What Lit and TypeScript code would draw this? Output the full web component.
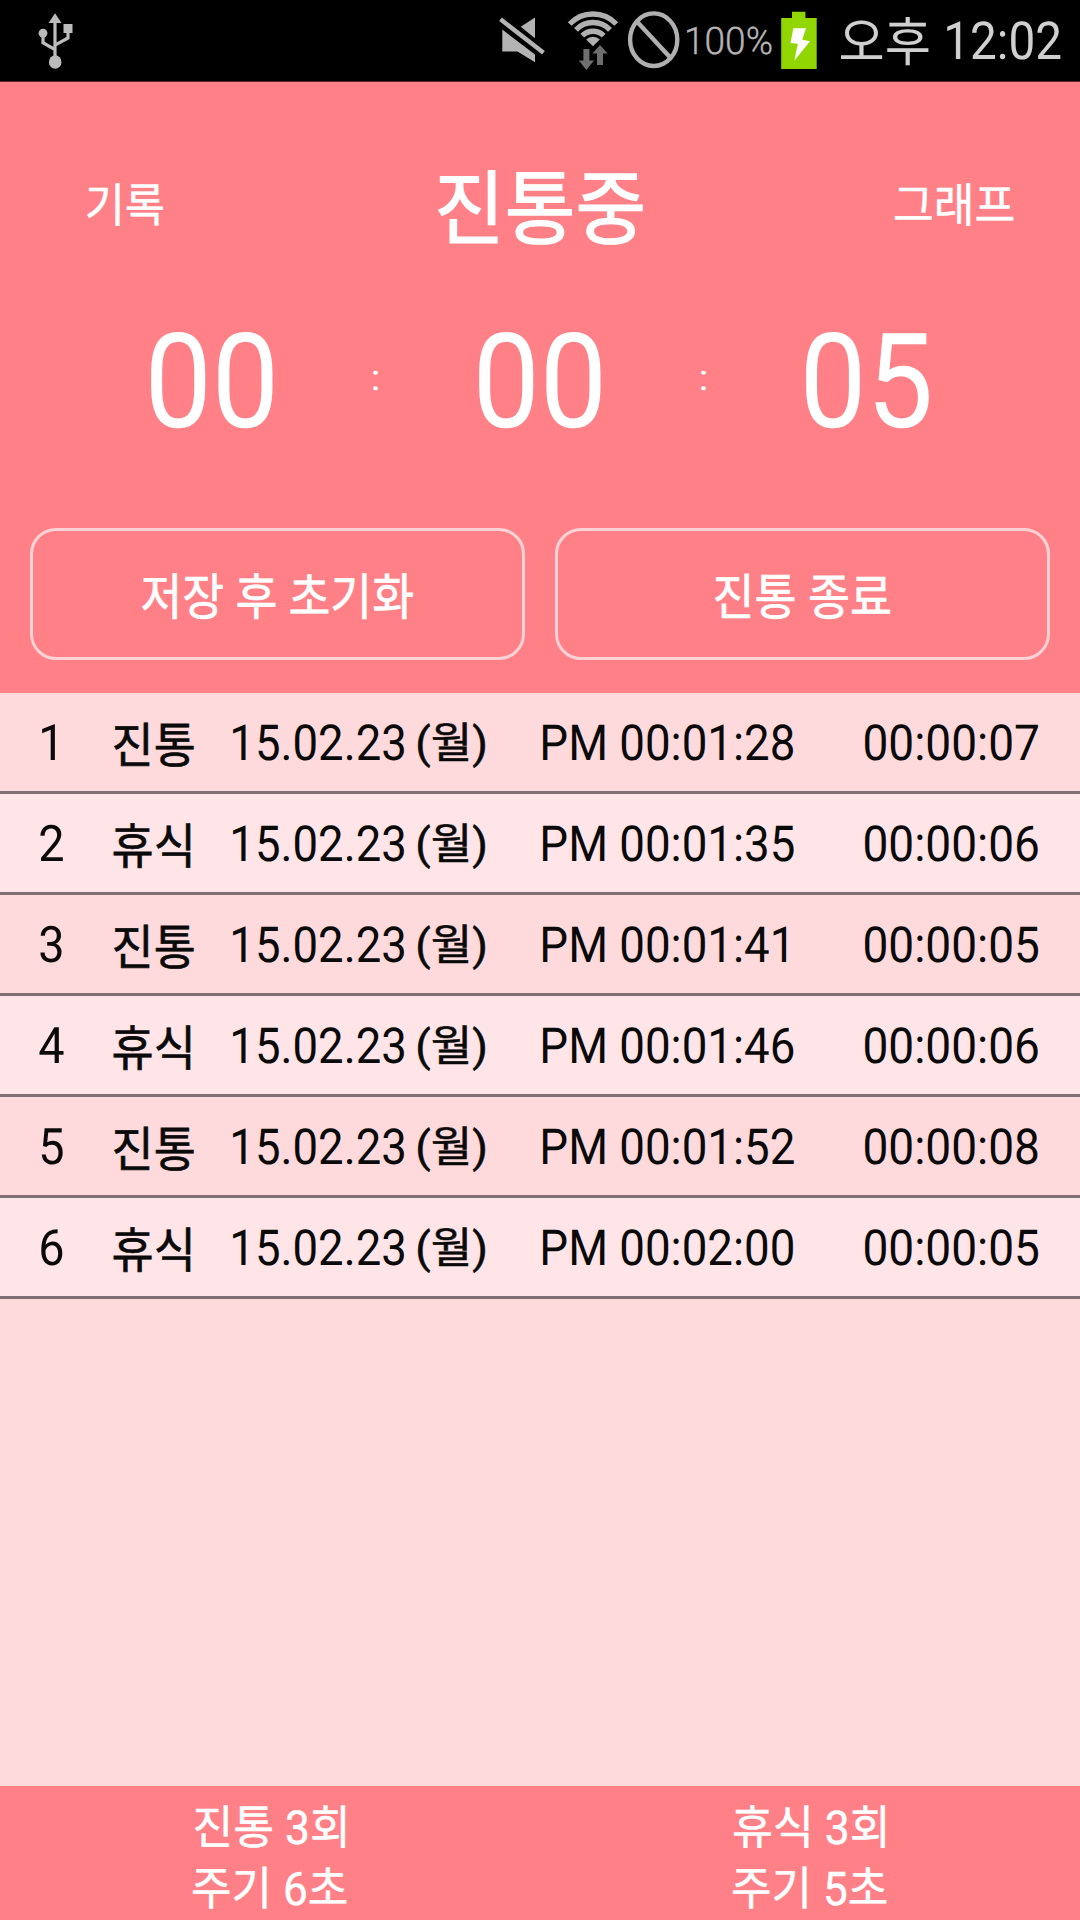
import { LitElement, html, css } from "lit";
import { customElement, property, state } from "lit/decorators.js";
import { styleMap } from "lit/directives/style-map.js";

const FAMILY = 'Roboto, "Noto Sans CJK KR", sans-serif';

/**
 * Condensed label: the glyphs of `sample` (or of the text itself) fill a box
 * of w x h pixels; the text is drawn at that same scale.
 */
@customElement("fit-text")
export class FitText extends LitElement {
  @property() text = "";
  @property() sample = "";
  @property({ type: Number }) w = 100;
  @property({ type: Number }) h = 40;
  @property({ type: Number }) weight = 400;
  @property({ type: Number }) stroke = 0;

  static styles = css`
    :host {
      display: block;
      flex: none;
    }
    .box {
      display: block;
    }
    .glyphs {
      display: block;
      width: max-content;
      white-space: pre;
      line-height: 1;
      transform-origin: 0 0;
      font-family: Roboto, "Noto Sans CJK KR", sans-serif;
      text-rendering: geometricPrecision;
    }
  `;

  render() {
    const ctx = document.createElement("canvas").getContext("2d")! as any;
    const sample = this.sample || this.text;
    const inkH = this.h - this.stroke;
    const inkW = this.w - this.stroke;
    ctx.font = `${this.weight} 200px ${FAMILY}`;
    ctx.textRendering = "geometricPrecision";
    const m = ctx.measureText(sample);
    const k = inkH / (m.actualBoundingBoxAscent + m.actualBoundingBoxDescent);
    const size = 200 * k;
    const sx = inkW / ((m.actualBoundingBoxLeft + m.actualBoundingBoxRight) * k);
    const up = Math.round(m.fontBoundingBoxAscent * k);
    const down = Math.round(m.fontBoundingBoxDescent * k);
    const base = size / 2 + (up - down) / 2;
    const dx = m.actualBoundingBoxLeft * k * sx + this.stroke / 2;
    const dy = m.actualBoundingBoxAscent * k - base + this.stroke / 2;
    return html`<span class="box" style=${styleMap({ width: `${this.w}px`, height: `${this.h}px` })}
      ><span
        class="glyphs"
        style=${styleMap({
          fontSize: `${size}px`,
          fontWeight: String(this.weight),
          transform: `matrix(${sx},0,0,1,${dx},${dy})`,
          "-webkit-text-stroke": `${this.stroke}px currentColor`,
        })}
        >${this.text}</span
      ></span
    >`;
  }
}

interface Entry {
  kind: string;
  time: string;
  length: string;
}

@customElement("app-root")
export class AppRoot extends LitElement {
  @state() private entries: Entry[] = [
    { kind: "진통", time: "PM 00:01:28", length: "00:00:07" },
    { kind: "휴식", time: "PM 00:01:35", length: "00:00:06" },
    { kind: "진통", time: "PM 00:01:41", length: "00:00:05" },
    { kind: "휴식", time: "PM 00:01:46", length: "00:00:06" },
    { kind: "진통", time: "PM 00:01:52", length: "00:00:08" },
    { kind: "휴식", time: "PM 00:02:00", length: "00:00:05" },
  ];

  static styles = css`
    :host {
      display: flex;
      flex-direction: column;
      width: 1080px;
      height: 1920px;
      overflow: hidden;
      background: #ffdadd;
      color: #fff;
    }
    svg {
      display: block;
      flex: none;
      height: 81px;
    }
    .status {
      display: flex;
      box-sizing: border-box;
      height: 82px;
      padding-left: 36px;
      border-bottom: 1px solid #5a2c2f;
      background: #000;
      color: #b4b4b4;
    }
    .usb {
      width: 40px;
      margin-right: auto;
    }
    .mute {
      width: 52px;
      margin-right: 18px;
    }
    .wifi {
      width: 54px;
      margin-right: 6px;
    }
    .blocked {
      width: 56px;
    }
    .percent {
      margin: 28px 8px 0 5.6px;
    }
    .battery {
      width: 38px;
    }
    .clock {
      display: flex;
      gap: 18px;
      margin: 16.7px 20px 0 23.7px;
      color: #d0d0d0;
    }
    .hour {
      margin-top: 4.3px;
    }
    .panel {
      flex: none;
      box-sizing: border-box;
      height: 611px;
      padding-top: 87.5px;
      background: #ff8086;
    }
    .titlebar {
      display: grid;
      grid-template-columns: 1fr 205px 1fr;
      height: 164.5px;
      padding: 0 66.2px 0 86.8px;
    }
    .heading {
      margin-left: -10px;
    }
    .nav {
      margin-top: 14.2px;
    }
    .end {
      justify-self: end;
    }
    .timer {
      display: grid;
      grid-template-columns: 122px 5px 122px 5px 123px;
      column-gap: 100.3px;
      height: 194px;
      padding-left: 151px;
    }
    .colon {
      margin-top: 37.3px;
    }
    .buttons {
      display: flex;
      gap: 30px;
      padding: 0 30px;
    }
    .button {
      display: flex;
      flex: 1;
      justify-content: center;
      align-items: center;
      box-sizing: border-box;
      height: 132px;
      padding-top: 8px;
      border: 3px solid #ffd3d5;
      border-radius: 26px;
    }
    .list {
      flex: 1;
    }
    .row {
      display: grid;
      grid-template-columns: 72.3px 119.9px 309.3px 321.9px 173.6px;
      box-sizing: border-box;
      height: 101px;
      padding-left: 41.3px;
      border-bottom: 3px solid #807073;
      background: #ffdadd;
      color: #0a0a0a;
    }
    .row:nth-child(even) {
      background: #ffe5e7;
    }
    .num {
      margin-top: 33.3px;
    }
    .kind {
      margin-top: 30px;
    }
    .date {
      display: flex;
      gap: 14px;
    }
    .day {
      margin-top: 29.8px;
    }
    .summary {
      display: grid;
      grid-template-columns: 1fr 1fr;
      flex: none;
      height: 134px;
      background: #ff8086;
    }
    .stat {
      display: flex;
      flex-direction: column;
      align-items: center;
      gap: 18.6px;
      padding-top: 19.7px;
    }
  `;

  private statusBar() {
    return html`<div class="status">
      <svg class="usb" viewBox="36 0 40 81" fill="#bcbcbc">
        <path
          d="M55 19V58M43 33V42.7L55 49.6M68 30V38L55 45.2"
          fill="none"
          stroke="#bcbcbc"
          stroke-width="3.2"
        />
        <path d="M55 13.3L61.5 23H48.5Z" />
        <circle cx="43" cy="33.2" r="4.4" />
        <rect x="63.5" y="24" width="9" height="9" />
        <ellipse cx="55.2" cy="62" rx="6.3" ry="6.8" />
      </svg>
      <svg class="mute" viewBox="496 0 52 81" fill="#b4b4b4">
        <path d="M520.7 26.7L535 17.5V38.3Z" />
        <path d="M502.3 29.6L535 54.4V62.3L517.5 51.5H502.3Z" />
        <path d="M500.5 19.3L543.5 52.8" stroke="#b4b4b4" stroke-width="4.4" />
      </svg>
      <svg class="wifi" viewBox="566 0 54 81">
        <g fill="none" stroke="#b0b0b0" stroke-width="5.4">
          <path d="M569.7 24A32 32 0 0 1 616.3 24" />
          <path d="M576 29.8A23.6 23.6 0 0 1 610 29.8" />
          <path d="M582.3 35.6A15.2 15.2 0 0 1 603.7 35.6" />
        </g>
        <path d="M586.2 39.6A9.5 9.5 0 0 1 599.8 39.6L593 46.3Z" fill="#b0b0b0" />
        <path d="M583.4 49H589.4V60.5H594L586.4 70L578.8 60.5H583.4Z" fill="#6e6e6e" />
        <path d="M600 45L607.6 53.5H603V65H597V53.5H592.4Z" fill="#6e6e6e" />
      </svg>
      <svg class="blocked" viewBox="626 0 56 81" fill="none" stroke="#b0b0b0" stroke-width="4.4">
        <ellipse cx="653.7" cy="39.7" rx="23.6" ry="26.3" />
        <path d="M637.6 22.3L670.2 57.5" />
      </svg>
      <fit-text class="percent" text="100%" w="84.4" h="28.5" weight="300" stroke="0.4"></fit-text>
      <svg class="battery" viewBox="780 0 38 81">
        <path d="M792 11.7H805.4V18H816.7V69H781.2V18H792Z" fill="#91d600" />
        <path d="M793.3 28.3H806L802.3 39.8L810 41.3L794.3 60.7L797.8 43.7L790.5 43Z" fill="#fff" />
      </svg>
      <div class="clock">
        <fit-text text="오후" w="87.3" h="48.3"></fit-text>
        <fit-text class="hour" text="12:02" w="113.3" h="38.5"></fit-text>
      </div>
    </div>`;
  }

  render() {
    return html`
      ${this.statusBar()}
      <div class="panel">
        <div class="titlebar">
          <fit-text class="nav" text="기록" w="76" h="43" stroke="0.5"></fit-text>
          <fit-text class="heading" text="진통중" w="205" h="75.5" stroke="1.3"></fit-text>
          <fit-text class="nav end" text="그래프" w="118.4" h="43" stroke="0.5"></fit-text>
        </div>
        <div class="timer">
          <fit-text text="00" w="122" h="97"></fit-text>
          <fit-text class="colon" text=":" w="5" h="19.7"></fit-text>
          <fit-text text="00" w="122" h="97"></fit-text>
          <fit-text class="colon" text=":" w="5" h="19.7"></fit-text>
          <fit-text text="05" w="123" h="97"></fit-text>
        </div>
        <div class="buttons">
          <div class="button">
            <fit-text text="저장 후 초기화" w="271" h="46.4" stroke="0.7"></fit-text>
          </div>
          <div class="button">
            <fit-text text="진통 종료" w="175" h="46" stroke="0.7"></fit-text>
          </div>
        </div>
      </div>
      <div class="list">
        ${this.entries.map(
          (e, i) => html`<div class="row">
            <fit-text class="num" text=${i + 1} sample="6" w="21.3" h="36.4"></fit-text>
            <fit-text class="kind" text=${e.kind} sample="진통" w="79.8" h="45" stroke="0.6"></fit-text>
            <div class="date">
              <fit-text class="num" text="15.02.23" w="171" h="36.4"></fit-text>
              <fit-text class="day" text="(월)" w="67.3" h="46" stroke="0.5"></fit-text>
            </div>
            <fit-text class="num" text=${e.time} sample="PM 00:01:28" w="250" h="36.4"></fit-text>
            <fit-text class="num" text=${e.length} sample="00:00:07" w="173" h="36.4"></fit-text>
          </div>`
        )}
      </div>
      <div class="summary">
        <div class="stat">
          <fit-text text="진통 3회" w="150.2" h="43" stroke="0.5"></fit-text>
          <fit-text text="주기 6초" w="153.2" h="42.7" stroke="0.5"></fit-text>
        </div>
        <div class="stat">
          <fit-text text="휴식 3회" w="151.2" h="43.2" stroke="0.5"></fit-text>
          <fit-text text="주기 5초" w="153.2" h="42.7" stroke="0.5"></fit-text>
        </div>
      </div>
    `;
  }
}
